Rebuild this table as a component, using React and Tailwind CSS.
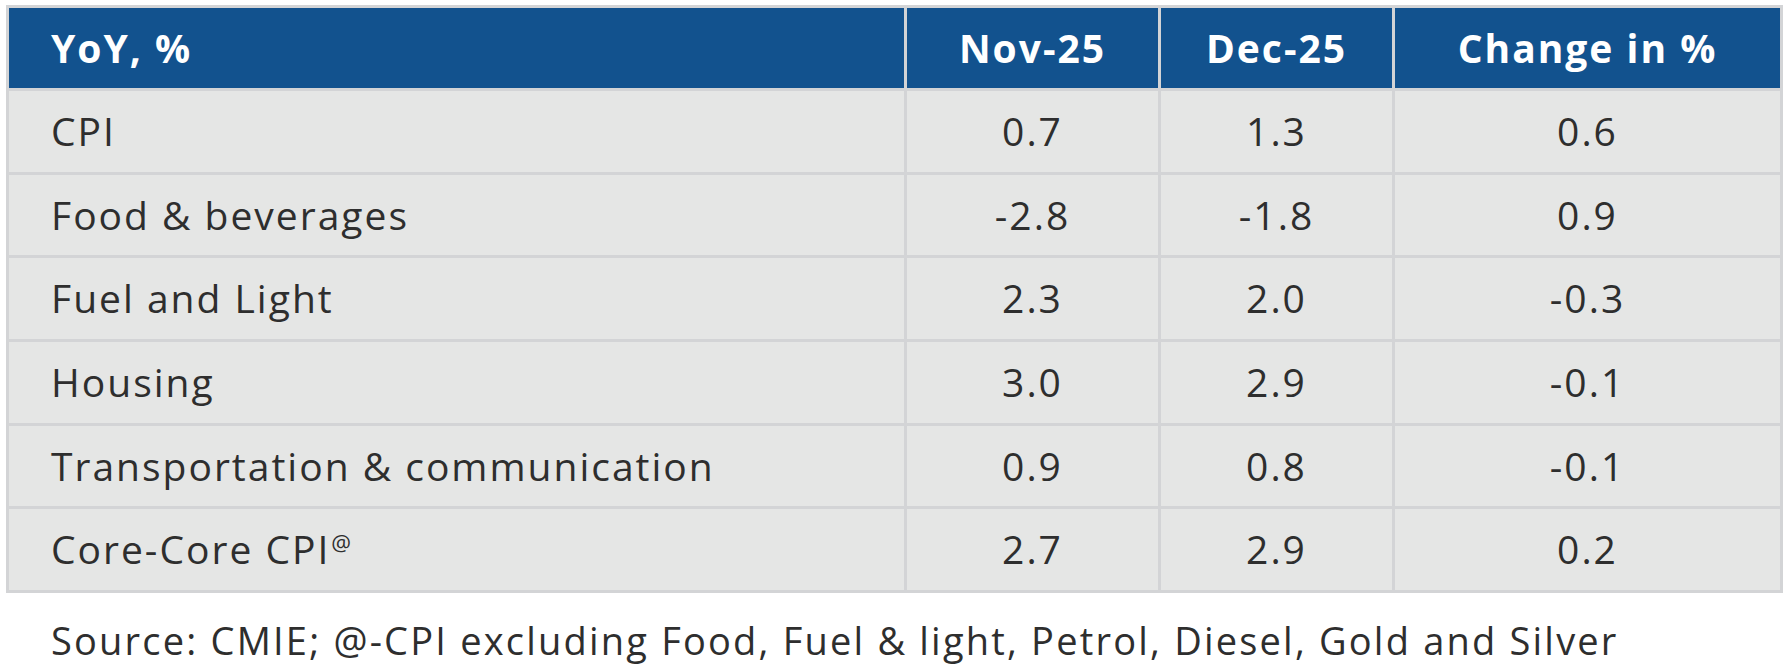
import React from 'react';

const rows = [
  { label: 'CPI', nov: '0.7', dec: '1.3', chg: '0.6' },
  { label: 'Food & beverages', nov: '-2.8', dec: '-1.8', chg: '0.9' },
  { label: 'Fuel and Light', nov: '2.3', dec: '2.0', chg: '-0.3' },
  { label: 'Housing', nov: '3.0', dec: '2.9', chg: '-0.1' },
  { label: 'Transportation & communication', nov: '0.9', dec: '0.8', chg: '-0.1' },
  { label: 'Core-Core CPI', sup: '@', nov: '2.7', dec: '2.9', chg: '0.2' },
];

const font = { fontFamily: '"Open Sans", "Liberation Sans", sans-serif' };

export default function App() {
  return (
    <div className="w-[1785px] h-[668px] bg-white pt-[5px] pl-[6px]" style={font}>
      <div className="w-[1777px] grid grid-cols-[895px_251px_231px_385px] grid-rows-[80px_repeat(6,80.67px)] gap-[3px] p-[3px] bg-[#d3d4d6]">
        <div className="bg-[#12528e] text-white font-bold text-[39px] tracking-[2px] flex items-center pl-[42px]">YoY, %</div>
        <div className="bg-[#12528e] text-white font-bold text-[39px] tracking-[2px] flex items-center justify-center">Nov-25</div>
        <div className="bg-[#12528e] text-white font-bold text-[39px] tracking-[2px] flex items-center justify-center">Dec-25</div>
        <div className="bg-[#12528e] text-white font-bold text-[39px] tracking-[2px] flex items-center justify-center">Change in %</div>
        {rows.map((r) => (
          <React.Fragment key={r.label}>
            <div className="bg-[#e5e6e5] text-[#2e2e2e] text-[39px] tracking-[2px] flex items-center pl-[42px]">
              <span>
                {r.label}
                {r.sup && <sup className="text-[22px] -top-[0.6em] ml-[1px]">{r.sup}</sup>}
              </span>
            </div>
            <div className="bg-[#e5e6e5] text-[#2e2e2e] text-[39px] tracking-[2px] flex items-center justify-center">{r.nov}</div>
            <div className="bg-[#e5e6e5] text-[#2e2e2e] text-[39px] tracking-[2px] flex items-center justify-center">{r.dec}</div>
            <div className="bg-[#e5e6e5] text-[#2e2e2e] text-[39px] tracking-[2px] flex items-center justify-center">{r.chg}</div>
          </React.Fragment>
        ))}
      </div>
      <p className="mt-[25px] pl-[45px] text-[38px] tracking-[2.2px] text-[#2e2e2e] leading-[44px] whitespace-nowrap">
        Source: CMIE; @-CPI excluding Food, Fuel &amp; light, Petrol, Diesel, Gold and Silver
      </p>
    </div>
  );
}
